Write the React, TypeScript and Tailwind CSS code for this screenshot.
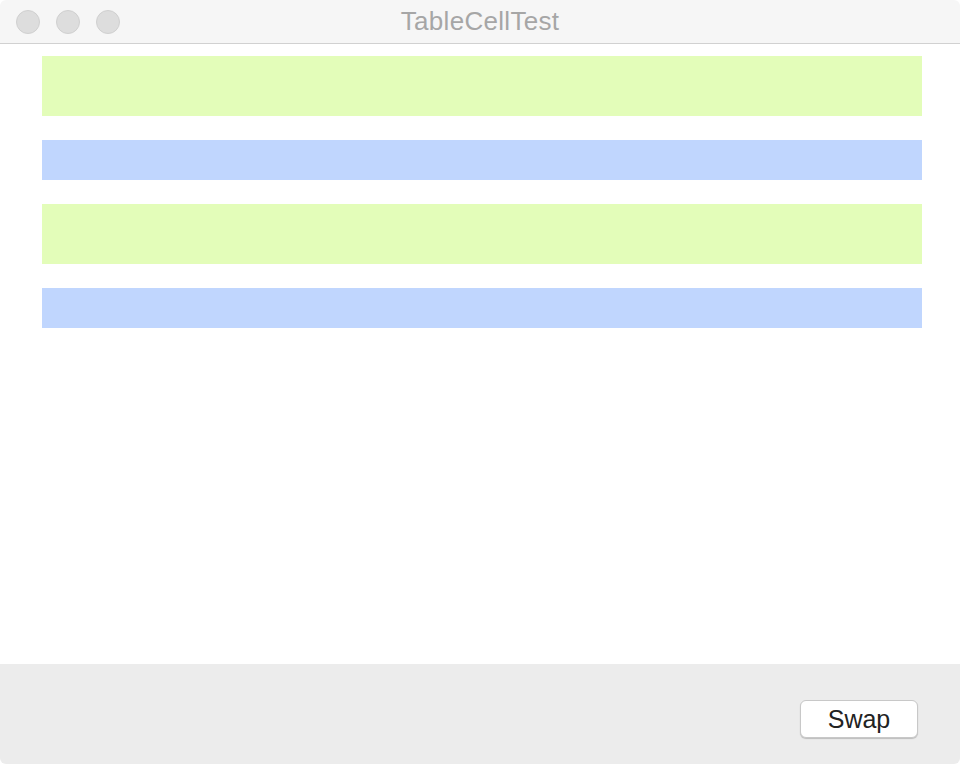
const rows = [
  { color: 'bg-[#e3fdb9]', height: 'h-[60px]' },
  { color: 'bg-[#c0d6fe]', height: 'h-[40px]' },
  { color: 'bg-[#e3fdb9]', height: 'h-[60px]' },
  { color: 'bg-[#c0d6fe]', height: 'h-[40px]' },
];

function TrafficLight() {
  return <div className="w-6 h-6 rounded-full bg-[#dddddd] border border-[#d0d0d0]" />;
}

export default function App() {
  return (
    <div
      className="w-[960px] h-[764px] flex flex-col bg-white overflow-hidden rounded-[6px]"
      style={{ fontFamily: '"Helvetica Neue", "Liberation Sans", Arial, sans-serif' }}
    >
      <div className="relative h-[44px] shrink-0 bg-[#f6f6f6] border-b border-[#d1d1d1] flex items-center">
        <div className="flex gap-4 pl-4">
          <TrafficLight />
          <TrafficLight />
          <TrafficLight />
        </div>
        <div className="absolute inset-0 flex items-center justify-center text-[26px] tracking-[0.3px] text-[#a6a6a6]">
          TableCellTest
        </div>
      </div>

      <div className="flex-1 flex flex-col gap-6 pt-3 pl-[42px] pr-[38px]">
        {rows.map((row, i) => (
          <div key={i} className={`${row.color} ${row.height} w-full`} />
        ))}
      </div>

      <div className="h-[100px] shrink-0 bg-[#ececec] flex justify-end items-start pt-[36px] pr-[42px]">
        <button className="w-[118px] h-[38px] bg-white rounded-[6px] border border-[#c8c8c8] shadow-[0_1px_1px_rgba(0,0,0,0.2)] text-[25px] text-[#222222] leading-none">
          Swap
        </button>
      </div>
    </div>
  );
}
